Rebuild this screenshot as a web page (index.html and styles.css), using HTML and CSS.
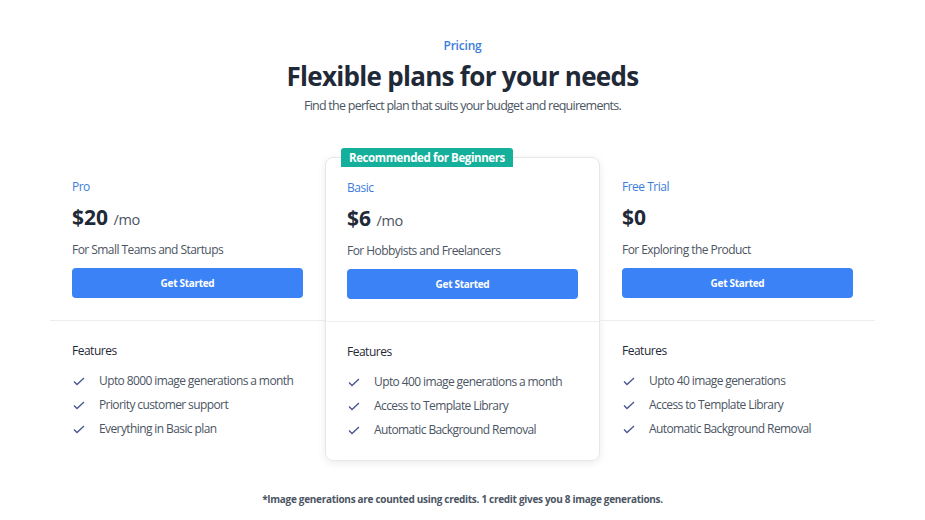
FILE: index.html
```html
<!DOCTYPE html>
<html lang="en">
<head>
  <meta charset="UTF-8">
  <meta name="viewport" content="width=device-width, initial-scale=1.0">
  <title>Pricing</title>
  <link rel="stylesheet" href="styles.css">
</head>
<body>
  <div class="pricing">
    <div class="pricing-header">
      <div class="eyebrow">Pricing</div>
      <h1>Flexible plans for your needs</h1>
      <p class="subtitle">Find the perfect plan that suits your budget and requirements.</p>
    </div>

    <div class="plans">
      <!-- Pro -->
      <div class="plan">
        <div class="plan-head">
          <div class="plan-name">Pro</div>
          <div class="plan-price">$20 <span>/mo</span></div>
          <div class="plan-desc">For Small Teams and Startups</div>
          <a href="#" class="button">Get Started</a>
        </div>
        <div class="plan-features">
          <div class="features-title">Features</div>
          <ul>
            <li><svg viewBox="0 0 14 14"><path d="M2 7.5l3 3 7-6.5"/></svg>Upto 8000 image generations a month</li>
            <li><svg viewBox="0 0 14 14"><path d="M2 7.5l3 3 7-6.5"/></svg>Priority customer support</li>
            <li><svg viewBox="0 0 14 14"><path d="M2 7.5l3 3 7-6.5"/></svg>Everything in Basic plan</li>
          </ul>
        </div>
      </div>

      <!-- Basic -->
      <div class="plan plan-featured">
        <div class="badge">Recommended for Beginners</div>
        <div class="plan-head">
          <div class="plan-name">Basic</div>
          <div class="plan-price">$6 <span>/mo</span></div>
          <div class="plan-desc">For Hobbyists and Freelancers</div>
          <a href="#" class="button">Get Started</a>
        </div>
        <div class="plan-features">
          <div class="features-title">Features</div>
          <ul>
            <li><svg viewBox="0 0 14 14"><path d="M2 7.5l3 3 7-6.5"/></svg>Upto 400 image generations a month</li>
            <li><svg viewBox="0 0 14 14"><path d="M2 7.5l3 3 7-6.5"/></svg>Access to Template Library</li>
            <li><svg viewBox="0 0 14 14"><path d="M2 7.5l3 3 7-6.5"/></svg>Automatic Background Removal</li>
          </ul>
        </div>
      </div>

      <!-- Free Trial -->
      <div class="plan">
        <div class="plan-head">
          <div class="plan-name">Free Trial</div>
          <div class="plan-price">$0</div>
          <div class="plan-desc">For Exploring the Product</div>
          <a href="#" class="button">Get Started</a>
        </div>
        <div class="plan-features">
          <div class="features-title">Features</div>
          <ul>
            <li><svg viewBox="0 0 14 14"><path d="M2 7.5l3 3 7-6.5"/></svg>Upto 40 image generations</li>
            <li><svg viewBox="0 0 14 14"><path d="M2 7.5l3 3 7-6.5"/></svg>Access to Template Library</li>
            <li><svg viewBox="0 0 14 14"><path d="M2 7.5l3 3 7-6.5"/></svg>Automatic Background Removal</li>
          </ul>
        </div>
      </div>
    </div>

    <p class="footnote">*Image generations are counted using credits. 1 credit gives you 8 image generations.</p>
  </div>
</body>
</html>
```

FILE: styles.css
```css
body {
  font-family: 'Open Sans', 'Noto Sans', sans-serif;
  background-color: white;
  color: #1f2937;
  margin: 0;
}
.pricing {
  width: 825px;
  margin: 0 auto;
  padding-top: 37px;
}
.pricing-header {
  text-align: center;
}
.eyebrow {
  color: #3b7dd8;
  font-size: 12px;
  font-weight: 600;
  line-height: 18px;
  letter-spacing: -0.2px;
}
h1 {
  margin: 3px 0 0;
  font-size: 26px;
  line-height: 36px;
  font-weight: 700;
  letter-spacing: -0.7px;
  color: #1f2937;
}
.subtitle {
  margin: 2px 0 0;
  font-size: 12.5px;
  line-height: 20px;
  letter-spacing: -0.75px;
  color: #4b5563;
}
.plans {
  display: grid;
  grid-template-columns: repeat(3, 1fr);
  margin-top: 41px;
}
.plan {
  position: relative;
}
.plan-featured {
  border: 1px solid #e5e7eb;
  border-radius: 8px;
  box-shadow: 0 2px 8px rgba(0, 0, 0, 0.08);
  margin-bottom: -2px;
}
.badge {
  position: absolute;
  top: -10px;
  left: 15px;
  background-color: #14b09b;
  color: white;
  font-size: 11.5px;
  font-weight: 700;
  line-height: 19px;
  letter-spacing: -0.4px;
  padding: 0 8px;
  border-radius: 3px 3px 0 0;
}
.plan-head {
  padding: 20px 22px 22px;
  border-bottom: 1px solid #eceef1;
}
.plan-featured .plan-head {
  padding-left: 21px;
  padding-right: 21px;
}
.plan-name {
  color: #3b7dd8;
  font-size: 12px;
  line-height: 20px;
  letter-spacing: -0.5px;
}
.plan-price {
  margin-top: 4px;
  font-size: 21px;
  font-weight: 700;
  line-height: 32px;
  color: #1f2937;
}
.plan-price span {
  font-size: 14.5px;
  font-weight: 400;
  line-height: 1;
  letter-spacing: -0.4px;
  color: #4b5563;
}
.plan-desc {
  margin-top: 7px;
  font-size: 12px;
  line-height: 20px;
  letter-spacing: -0.55px;
  color: #4b5563;
}
.button {
  display: block;
  margin-top: 8px;
  height: 30px;
  line-height: 30px;
  background-color: #3b82f6;
  color: white;
  text-align: center;
  text-decoration: none;
  font-size: 10px;
  font-weight: 700;
  letter-spacing: -0.3px;
  border-radius: 4px;
}
.plan-features {
  padding: 20px 22px 20px;
}
.plan-featured .plan-features {
  padding-left: 21px;
  padding-right: 21px;
}
.features-title {
  font-size: 12px;
  line-height: 20px;
  letter-spacing: -0.5px;
  color: #1f2937;
}
.plan-features ul {
  list-style: none;
  margin: 10px 0 0;
  padding: 0;
  display: flex;
  flex-direction: column;
  gap: 4px;
}
.plan-features li {
  display: flex;
  align-items: center;
  font-size: 12px;
  line-height: 20px;
  letter-spacing: -0.6px;
  color: #4b5563;
}
.plan-features svg {
  width: 14px;
  height: 14px;
  margin: 0 13px 0 0;
  fill: none;
  stroke: #46568f;
  stroke-width: 1.3;
}
.footnote {
  margin: 32px 0 0;
  text-align: center;
  font-size: 10px;
  font-weight: 700;
  line-height: 16px;
  letter-spacing: -0.3px;
  color: #4b5563;
}
```
